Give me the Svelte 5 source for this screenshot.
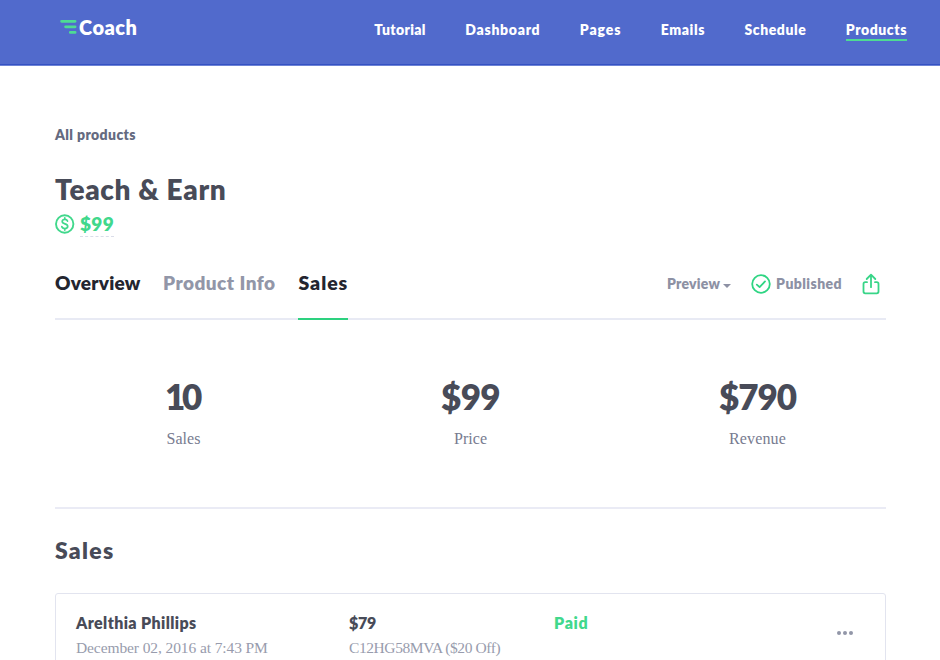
<script>
  const links = ['Tutorial', 'Dashboard', 'Pages', 'Emails', 'Schedule', 'Products'];
  const stats = [
    { value: '10', label: 'Sales', kind: 'count' },
    { value: '$99', label: 'Price', kind: 'price' },
    { value: '$790', label: 'Revenue', kind: 'revenue' }
  ];
</script>

<header>
  <a class="logo" href="#home">
    <svg width="17" height="16" viewBox="0 0 17 16" fill="none" stroke="#4edb93" stroke-width="2.8" stroke-linecap="round">
      <path d="M1.6 2.3H15.1M5.6 7.8H15.1M10.3 13.4H15.1" />
    </svg>
    <span>Coach</span>
  </a>
  <nav>
    {#each links as link}
      <a href="#{link}" class:current={link === 'Products'}>{link}</a>
    {/each}
  </nav>
</header>

<main>
  <a class="back" href="#all">All products</a>
  <h1>Teach &amp; Earn</h1>
  <div class="cost">
    <svg width="20" height="20" viewBox="0 0 20 20" fill="none" stroke="#41d88c" stroke-linecap="round">
      <circle cx="9.7" cy="10" r="8.7" stroke-width="1.9" />
      <path stroke-width="1.7" d="M12.5 7.1C12.1 5.9 11 5.3 9.8 5.3C8.3 5.3 7.2 6.2 7.2 7.5C7.2 10.6 12.7 9.1 12.7 12.3C12.7 13.7 11.5 14.6 9.9 14.6C8.3 14.6 7.2 13.9 6.8 12.6M9.8 3.8V5.3M9.8 14.6V16.1" />
    </svg>
    <span>$99</span>
  </div>

  <div class="bar">
    <div class="tabs">
      <a class="overview" href="#overview">Overview</a>
      <a class="info" href="#info">Product Info</a>
      <a class="sales" href="#sales">Sales</a>
    </div>
    <div class="actions">
      <span class="preview">Preview</span>
      <i class="caret"></i>
      <svg class="check" width="20" height="20" viewBox="0 0 20 20" fill="none" stroke="#2fd583" stroke-linecap="round" stroke-linejoin="round">
        <circle cx="10" cy="10" r="8.8" stroke-width="1.8" />
        <path stroke-width="1.8" d="M5.8 10.6L8.6 13.1L14 7.4" />
      </svg>
      <span class="published">Published</span>
      <svg class="share" width="18" height="22" viewBox="0 0 18 22" fill="none" stroke="#38d588" stroke-width="1.8" stroke-linecap="round" stroke-linejoin="round">
        <path d="M5 9.2H3.2Q1.5 9.2 1.5 10.9V18.6Q1.5 20.3 3.2 20.3H14.8Q16.5 20.3 16.5 18.6V10.9Q16.5 9.2 14.8 9.2H13M9 14.2V1.7M4.7 6L9 1.7L13.3 6" />
      </svg>
    </div>
  </div>

  <section class="stats">
    {#each stats as s}
      <div class="stat {s.kind}">
        <strong>{s.value}</strong>
        <span>{s.label}</span>
      </div>
    {/each}
  </section>

  <h2>Sales</h2>
  <article>
    <div class="buyer">
      <strong>Arelthia Phillips</strong>
      <span>December 02, 2016 at 7:43 PM</span>
    </div>
    <div class="amount">
      <strong>$79</strong>
      <span>C12HG58MVA ($20 Off)</span>
    </div>
    <div class="status"><strong>Paid</strong></div>
    <div class="more"><i></i><i></i><i></i></div>
  </article>
</main>

<style>
  :global(body) { background: #fff; overflow: hidden; }
  :global(#app) { height: 660px; overflow: hidden; font-family: Lato, "Open Sans", sans-serif; font-weight: 800; color: #484b58; }
  a { color: inherit; text-decoration: none; }
  h1, h2 { margin: 0; font-weight: 800; }
  svg { display: block; flex: none; }

  header { box-sizing: border-box; height: 66px; padding: 0 33px 0 60px; display: flex; justify-content: space-between; background: #516acc; border-bottom: 1px solid #6d83d5; box-shadow: inset 0 -1px #3451c3; color: #fff; }
  .logo { display: flex; gap: 2px; padding-top: 15px; height: 24px; font-size: 20px; line-height: 24px; letter-spacing: 0.5px; }
  .logo svg { margin-top: 4px; }
  nav { display: flex; gap: 39.5px; padding-top: 20px; font-size: 14px; line-height: 20px; }
  nav a { height: 19px; letter-spacing: 0.57px; white-space: nowrap; }
  nav a:nth-child(1) { letter-spacing: 0.34px; }
  nav a:nth-child(2) { letter-spacing: 0.71px; }
  nav a:nth-child(3) { letter-spacing: 0.88px; }
  nav .current { border-bottom: 2px solid #4edb93; }

  main { width: 831px; padding: 59px 0 0 55px; }
  .back { display: block; font-size: 14px; line-height: 20px; letter-spacing: 0.39px; color: #656a80; }
  h1 { box-sizing: border-box; height: 38px; margin: 25px 0 4px; padding-top: 1px; font-size: 28px; line-height: 36px; letter-spacing: 0.65px; }
  .cost { display: flex; gap: 5px; height: 25px; color: #41d88c; }
  .cost svg { margin-top: 2px; }
  .cost span { height: 24px; font-size: 19px; line-height: 24px; letter-spacing: 0.31px; border-bottom: 1px dashed #dadde9; }

  .bar { box-sizing: border-box; height: 67px; margin-top: 16px; display: flex; justify-content: space-between; border-bottom: 2px solid #e8eaf4; }
  .tabs { display: flex; font-size: 19px; line-height: 28px; color: #23252f; padding-top: 16px; }
  .overview { letter-spacing: 0.21px; }
  .info { margin-left: 22.5px; letter-spacing: 0.46px; color: #9296a8; }
  .sales { box-sizing: border-box; height: 51px; margin-left: 23px; font-size: 19.5px; letter-spacing: 0.95px; border-bottom: 2px solid #2dd17f; }
  .actions { display: flex; align-items: center; height: 22px; margin-top: 20px; padding-right: 6px; font-size: 14px; line-height: 20px; color: #8d91a4; }
  .preview { letter-spacing: 0.21px; }
  .caret { margin: 3px 20px 0 3px; border: 4px solid transparent; border-top-color: #8d91a4; border-bottom: 0; }
  .published { margin: 0 20px 0 5px; letter-spacing: 0.42px; }

  .stats { box-sizing: border-box; height: 189px; display: flex; justify-content: space-between; padding: 55px 0 0; border-bottom: 2px solid #eaebf5; }
  .stat { width: 257px; display: flex; flex-direction: column; align-items: center; }
  .stat strong { font-size: 35px; line-height: 42px; font-weight: 800; letter-spacing: -0.63px; }
  .stat span { margin-top: 12px; font: 400 16px/20px "Liberation Serif", serif; letter-spacing: 0.05px; color: #777b90; }
  .count strong { margin-left: -3px; letter-spacing: -3.3px; }
  .revenue strong { letter-spacing: -1.05px; }
  .revenue span { letter-spacing: 0.15px; }

  h2 { margin-top: 25px; font-size: 23px; line-height: 32px; letter-spacing: 1.28px; }
  article { box-sizing: border-box; height: 90px; margin-top: 27px; padding: 18px 0 0 20px; display: flex; border: 1px solid #e2e4ef; border-radius: 3px; }
  article strong { display: block; font-size: 16px; line-height: 22px; font-weight: 800; }
  article span { display: block; margin-top: 4px; font: 400 15.5px/20px "Liberation Serif", serif; color: #989cad; white-space: nowrap; }
  .buyer { width: 273px; }
  .buyer strong { letter-spacing: 0.38px; }
  .buyer span { letter-spacing: -0.1px; }
  .amount { width: 205px; }
  .amount strong { letter-spacing: -0.28px; }
  .amount span { letter-spacing: -0.42px; }
  .status { width: 283px; color: #41d88c; }
  .status strong { letter-spacing: 0.7px; }
  .more { display: flex; gap: 2px; padding-top: 19px; }
  .more i { width: 4px; height: 4px; border-radius: 2px; background: #9296a8; }
</style>
